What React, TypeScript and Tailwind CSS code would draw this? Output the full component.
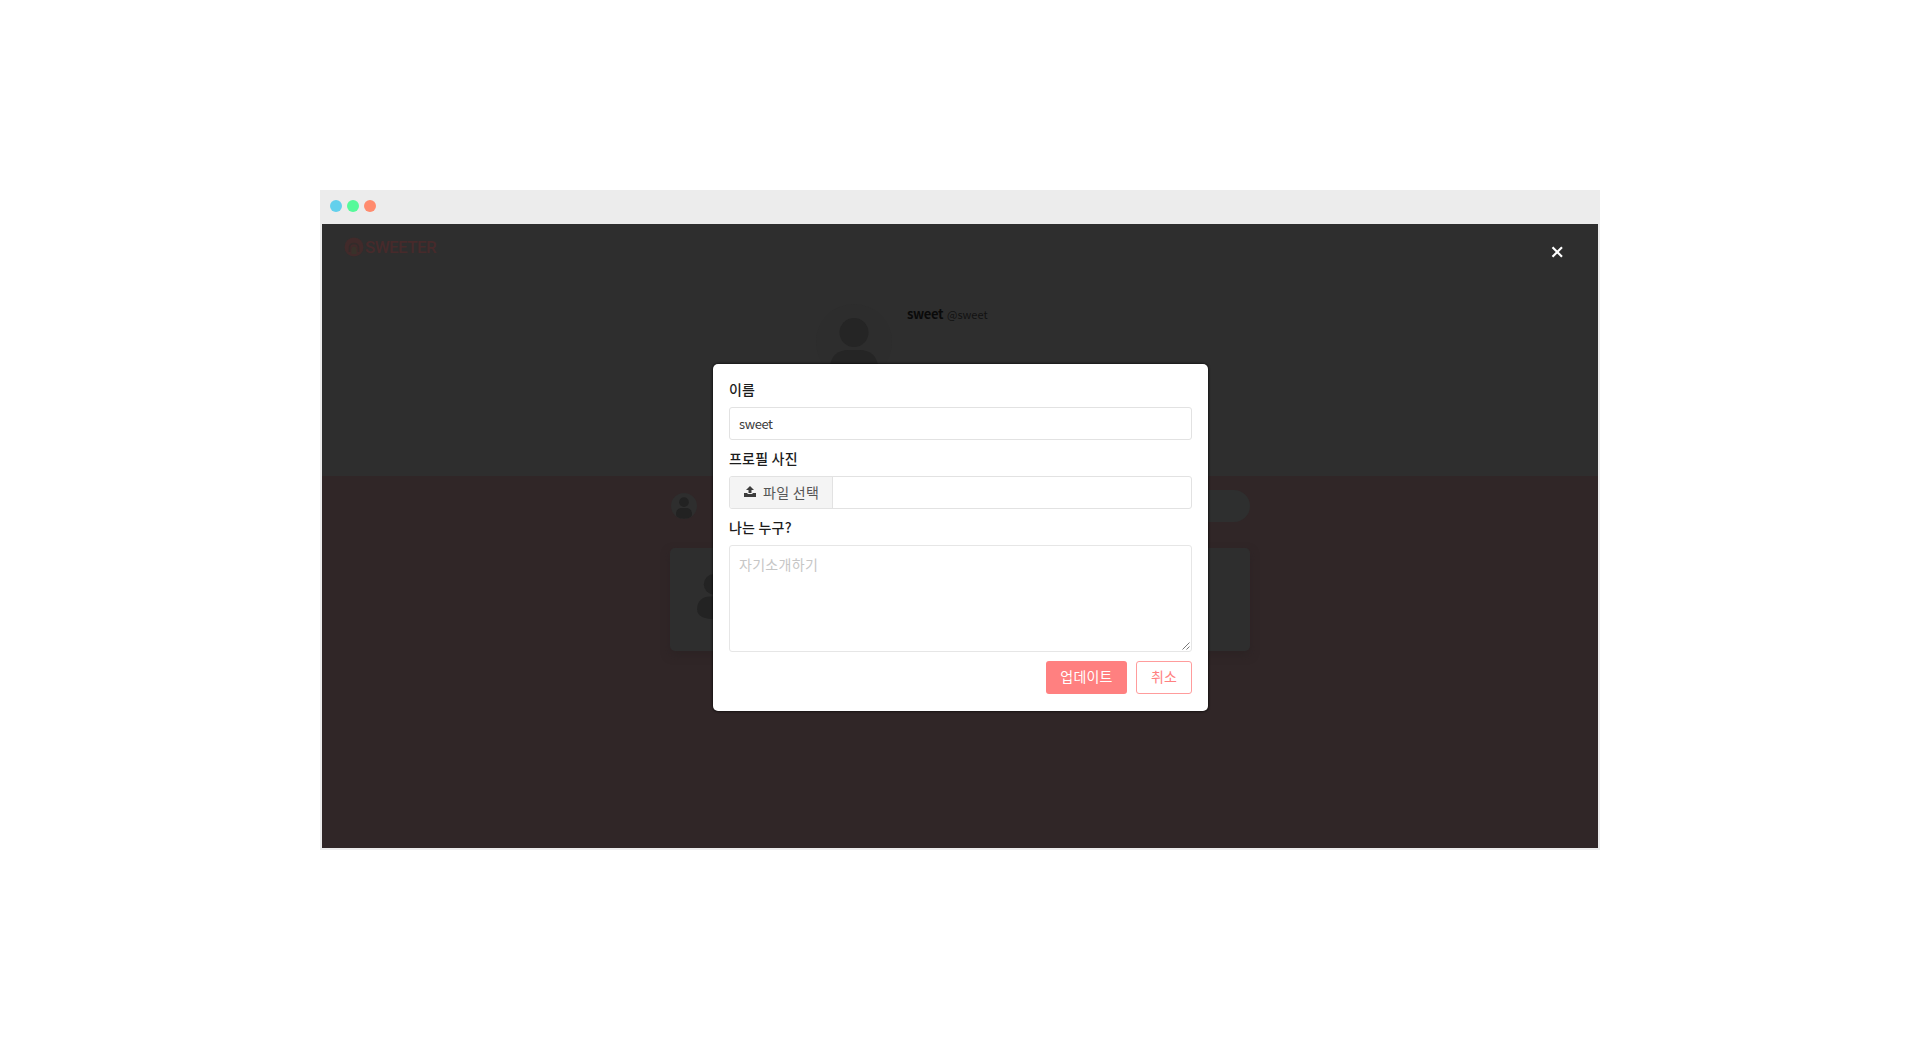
import React from "react";

const dots = ["bg-[#63d0ec]", "bg-[#56fa9a]", "bg-[#ff8b6e]"];

function Person({ className }: { className: string }) {
  return (
    <svg viewBox="0 0 48 64" className={className} fill="currentColor">
      <circle cx="24" cy="14.5" r="14.5" />
      <path d="M0 50C0 38 8 32 18 32H30C40 32 48 38 48 50C48 60 38 64 24 64S0 60 0 50Z" />
    </svg>
  );
}

function Label({ children }: { children: React.ReactNode }) {
  return (
    <div className="mb-2 h-[19px] whitespace-nowrap text-[14px] font-medium leading-[19px] tracking-[0.2px] text-[#1c1c1c]">
      {children}
    </div>
  );
}

function Logo() {
  return (
    <div className="flex h-[22px] items-center text-[#472a2b]">
      <svg viewBox="0 0 20 20" className="h-5 w-5" fill="none">
        <circle cx="10" cy="10" r="9.5" fill="#412a2a" />
        <path d="M5.500 15V11C5.500 8 7.500 6.500 10 6.500S14.500 8 14.500 11V15" stroke="#332b2a" strokeWidth="1.5" />
        <path d="M7.500 17V12C7.500 10.500 8.500 9.500 10 9.500S12.500 10.500 12.500 12V17Z" fill="#38322a" />
      </svg>
      <span className="ml-px mt-px w-[72px] whitespace-nowrap font-['Roboto',sans-serif] text-[17px] font-medium leading-none tracking-[-0.6px]">
        SWEETER
      </span>
    </div>
  );
}

export default function App() {
  return (
    <div className="flex h-[1040px] w-full items-center justify-center bg-white font-['Noto_Sans_CJK_KR',sans-serif]">
      <div className="h-[660px] w-[1280px] bg-[#ececec] px-0.5 pb-0.5">
        <div className="flex h-[34px] items-center gap-[5px] pb-0.5 pl-2">
          {dots.map((d) => (
            <span key={d} className={`h-3 w-3 rounded-full ${d}`} />
          ))}
        </div>
        <div className="relative h-[624px] overflow-hidden bg-[#302627]">
          <div className="h-[252px] bg-[#2e2e2e] pl-[22px] pt-3">
            <Logo />
            <div className="ml-[472px] mt-[46px] flex">
              <div className="flex h-[76px] w-[76px] justify-center rounded-full bg-[#2d2d2d] pt-[14px]">
                <Person className="h-16 w-12 text-[#252525]" />
              </div>
              <div className="ml-[15px] mt-px flex h-[18px] items-baseline gap-1 whitespace-nowrap text-[13px] leading-[18px] text-[#0a0a0a]">
                <b className="tracking-[-0.4px]">sweet</b>
                <span className="text-[11px] text-[#121212]">@sweet</span>
              </div>
            </div>
          </div>
          <div className="mx-auto w-[580px]">
            <div className="flex h-[60px] items-center gap-12 pl-px">
              <div className="flex h-[26px] w-[26px] items-center justify-center rounded-full bg-[#2e2e2e]">
                <Person className="mt-1 h-[22px] w-4 text-[#222222]" />
              </div>
              <div className="h-8 flex-1 rounded-full bg-[#2e2f2f]" />
            </div>
            <div className="mt-3 h-[103px] rounded-[5px] bg-[#2e2e2e] pl-[27px] pt-[26px] shadow-[0_4px_8px_#2c2324]">
              <Person className="h-[45px] w-[34px] text-[#232323]" />
            </div>
          </div>

          <button className="absolute right-[34px] top-[21px] text-white" aria-label="close">
            <svg viewBox="0 0 14 14" className="h-3.5 w-3.5" fill="none" stroke="currentColor" strokeWidth="2.2">
              <path d="M2.500 2.200L12 11.700M12 2.200L2.500 11.700" />
            </svg>
          </button>

          <div className="absolute left-[391px] top-[140px] h-[347px] w-[495px] rounded-[5px] bg-white px-4 pt-4 shadow-[0_0_2px_1px_rgba(0,0,0,0.5)]">
            <Label>이름</Label>
            <div className="mb-[9px] flex h-[33px] items-center rounded-[3px] border border-[#e2e2e2] px-[9px] text-[13px] tracking-[-0.4px] text-[#3c3c3c]">
              sweet
            </div>
            <Label>프로필 사진</Label>
            <div className="mb-[9px] flex h-[33px] overflow-hidden rounded-[3px] border border-[#e2e2e2]">
              <div className="flex w-[103px] items-center border-r border-[#e2e2e2] bg-[#f4f4f4] pb-0.5 pl-[14px] text-[#3d3d3d]">
                <svg viewBox="0 0 12 11" className="h-[11px] w-3" fill="currentColor">
                  <path d="M6 0L10 4H7.5V7H4.500V4H2ZM0 7H3.500V8H8.500V7H12V11H0Z" />
                </svg>
                <span className="ml-[7px] whitespace-nowrap text-[14px] leading-none tracking-[0.3px] text-[#555555]">파일 선택</span>
              </div>
            </div>
            <Label>나는 누구?</Label>
            <div className="relative h-[107px] rounded-[3px] border-[1.500px] border-[#e6e6e6] px-[9px] pt-[7px] text-[14px] leading-[22px] tracking-[0.3px] text-[#c6c6c6]">
              자기소개하기
              <svg viewBox="0 0 8 8" className="absolute bottom-px right-px h-2 w-2" stroke="#777777" strokeWidth="1">
                <path d="M0.500 7.500L7.500 0.500M4.500 7.500L7.500 4.500" />
              </svg>
            </div>
            <div className="mt-[9px] flex justify-end gap-[9px] text-[14px] tracking-[0.2px]">
              <button className="h-[33px] w-[81px] whitespace-nowrap rounded-[3px] bg-[#ff8080] pb-0.5 text-white">업데이트</button>
              <button className="h-[33px] w-[56px] whitespace-nowrap rounded-[3px] border border-[#ff9c9c] pb-0.5 text-[#ff8080]">취소</button>
            </div>
          </div>
        </div>
      </div>
    </div>
  );
}
